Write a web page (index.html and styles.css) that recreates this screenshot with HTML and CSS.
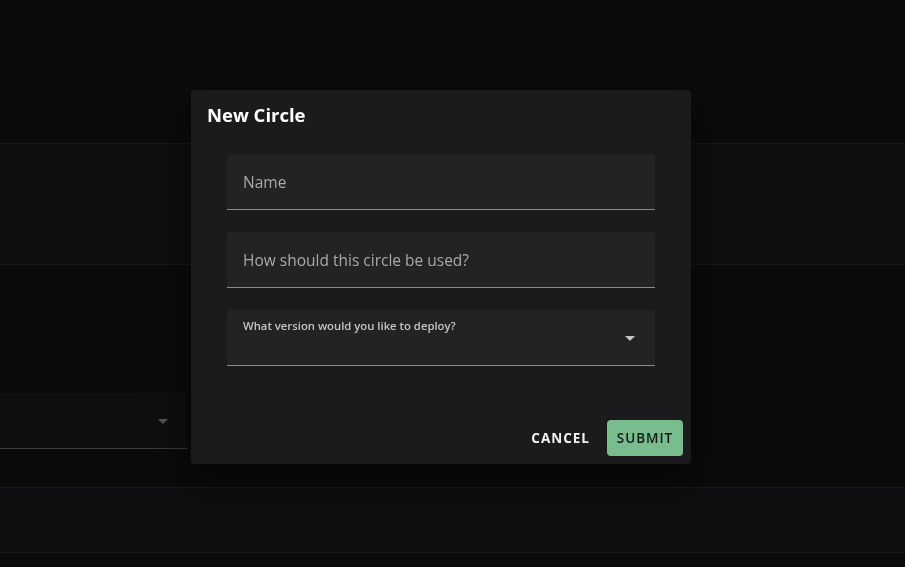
FILE: index.html
```html
<!DOCTYPE html>
<html lang="en">
<head>
<meta charset="utf-8">
<title>New Circle</title>
<link rel="stylesheet" href="styles.css">
</head>
<body>
<div class="page">
  <div class="spacer-top"></div>
  <div class="band band-tall"></div>
  <div class="spacer-mid"></div>
  <div class="bg-select">
    <svg class="bg-arrow" width="10" height="5" viewBox="0 0 10 5"><path d="M0 0h10L5 5z" fill="#565656"/></svg>
  </div>
  <div class="spacer-low"></div>
  <div class="band band-short"></div>
</div>

<div class="overlay">
  <div class="dialog" role="dialog" aria-labelledby="dlg-title">
    <h2 class="dialog-title" id="dlg-title">New Circle</h2>
    <div class="dialog-content">
      <div class="field">
        <span class="field-label">Name</span>
      </div>
      <div class="field">
        <span class="field-label">How should this circle be used?</span>
      </div>
      <div class="field field-select">
        <span class="select-label">What version would you like to deploy?</span>
        <svg class="select-arrow" width="10" height="5" viewBox="0 0 10 5"><path d="M0 0h10L5 5z" fill="#c4c4c4"/></svg>
      </div>
    </div>
    <div class="dialog-actions">
      <button class="btn btn-text">CANCEL</button>
      <button class="btn btn-primary">SUBMIT</button>
    </div>
  </div>
</div>
</body>
</html>
```

FILE: styles.css
```css
* { box-sizing: border-box; }

html, body {
  margin: 0;
  padding: 0;
  height: 100%;
  background: #0b0b0b;
  font-family: "Open Sans", "Noto Sans", "Liberation Sans", sans-serif;
  overflow: hidden;
}

.page {
  display: flex;
  flex-direction: column;
  width: 100%;
}

.spacer-top { height: 143px; }
.spacer-mid { height: 128px; }
.spacer-low { height: 38px; }

.band {
  background: #0f0f11;
  border-top: 1px solid #19191b;
  border-bottom: 1px solid #19191b;
}
.band-tall { height: 122px; }
.band-short { height: 66px; }

.bg-select {
  width: 187px;
  height: 56px;
  background: #0f0f0f;
  border-bottom: 1px solid #3c3c3c;
  display: flex;
  align-items: center;
  justify-content: flex-end;
  padding-right: 19px;
}
.bg-arrow { display: block; margin-top: 2px; }

.overlay {
  position: fixed;
  inset: 0;
  display: flex;
  align-items: flex-start;
  justify-content: flex-start;
  padding: 90px 0 0 191px;
}

.dialog {
  width: 500px;
  height: 374px;
  background: #1b1b1d;
  border-radius: 4px;
  box-shadow: 0 11px 15px -7px rgba(0,0,0,.35), 0 24px 38px 3px rgba(0,0,0,.25), 0 9px 46px 8px rgba(0,0,0,.2);
  display: flex;
  flex-direction: column;
}

.dialog-title {
  margin: 0;
  padding: 11px 16px 0 16px;
  height: 64px;
  font-size: 18.5px;
  line-height: 28px;
  font-weight: 700;
  color: #ffffff;
}

.dialog-content {
  padding: 0 36px;
  display: flex;
  flex-direction: column;
  gap: 22px;
}

.field {
  height: 56px;
  background: #232325;
  border-radius: 4px 4px 0 0;
  border-bottom: 1px solid #8a8a8a;
  padding: 0 16px;
  display: flex;
  align-items: center;
}

.field-label {
  font-size: 15.5px;
  color: #a9a9a9;
  line-height: 20px;
}

.field-select {
  position: relative;
  align-items: flex-start;
}

.select-label {
  font-size: 11.3px;
  font-weight: 600;
  color: #c4c4c4;
  line-height: 16px;
  margin-top: 8px;
}

.select-arrow {
  position: absolute;
  right: 20px;
  top: 26px;
}

.dialog-actions {
  margin-top: auto;
  padding: 8px;
  display: flex;
  justify-content: flex-end;
  align-items: center;
  gap: 7px;
}

.btn {
  font-family: inherit;
  font-size: 13.5px;
  height: 36px;
  border: none;
  border-radius: 4px;
  letter-spacing: 1px;
  cursor: pointer;
}

.btn-text {
  background: transparent;
  color: #f2f2f2;
  font-weight: 700;
  padding: 0 10px;
}

.btn-primary {
  background: #79bd8f;
  color: #101a14;
  font-weight: 600;
  padding: 0 8px;
  width: 76px;
  letter-spacing: 1px;
}
```
